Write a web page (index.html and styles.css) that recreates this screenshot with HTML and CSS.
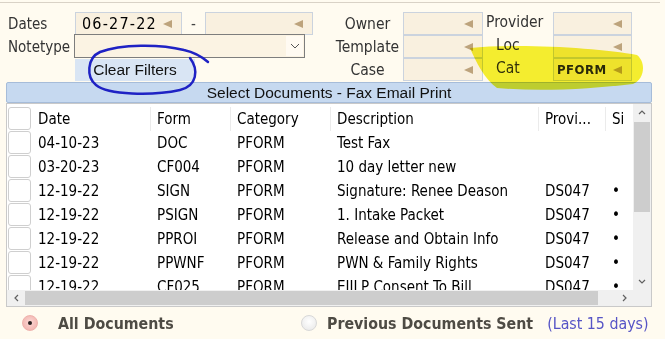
FILE: index.html
```html
<!DOCTYPE html>
<html lang="en">
<head>
    <meta charset="UTF-8">
    <title>Select Documents</title>
    <link rel="stylesheet" href="styles.css">
</head>
<body>
<div class="page">
    <div class="topline"></div>

    <div class="filters">
        <div class="left">
            <div class="frow">
                <span class="lbl">Dates</span>
                <div class="field date"><span class="val">06-27-22</span><i class="tri"></i></div>
                <span class="dash">-</span>
                <div class="field date2"><i class="tri"></i></div>
            </div>
            <div class="frow">
                <span class="lbl">Notetype</span>
                <div class="select">
                    <span class="chev">
                        <svg width="10" height="6" viewBox="0 0 10 6"><path d="M1 1 L5 5 L9 1" fill="none" stroke="#555" stroke-width="1"/></svg>
                    </span>
                </div>
            </div>
            <div class="frow">
                <button class="clear">Clear Filters</button>
            </div>
        </div>

        <div class="mid">
            <div class="frow"><span class="clbl">Owner</span><div class="field box"><i class="tri"></i></div></div>
            <div class="frow"><span class="clbl">Template</span><div class="field box"><i class="tri"></i></div></div>
            <div class="frow"><span class="clbl">Case</span><div class="field box"><i class="tri"></i></div></div>
        </div>

        <div class="right">
            <div class="frow"><span class="rlbl">Provider</span><div class="field rbox"><i class="tri"></i></div></div>
            <div class="frow"><span class="rlbl indent">Loc</span><div class="field rbox"><i class="tri"></i></div></div>
            <div class="frow"><span class="rlbl indent">Cat</span><div class="field rbox"><span class="code">PFORM</span><i class="tri"></i></div></div>
        </div>
    </div>

    <div class="bar">Select Documents - Fax Email Print</div>

    <div class="grid">
        <div class="view">
            <div class="rows">
                <div class="row head">
                    <span class="cb"><i></i></span>
                    <span class="c">Date</span>
                    <span class="c sep">Form</span>
                    <span class="c sep">Category</span>
                    <span class="c sep">Description</span>
                    <span class="c sep">Provi...</span>
                    <span class="c sep">Si</span>
                </div>
                <div class="row">
                    <span class="cb"><i></i></span>
                    <span class="c">04-10-23</span><span class="c">DOC</span><span class="c">PFORM</span>
                    <span class="c">Test Fax</span><span class="c"></span><span class="c"></span>
                </div>
                <div class="row">
                    <span class="cb"><i></i></span>
                    <span class="c">03-20-23</span><span class="c">CF004</span><span class="c">PFORM</span>
                    <span class="c">10 day letter new</span><span class="c"></span><span class="c"></span>
                </div>
                <div class="row">
                    <span class="cb"><i></i></span>
                    <span class="c">12-19-22</span><span class="c">SIGN</span><span class="c">PFORM</span>
                    <span class="c">Signature: Renee Deason</span><span class="c">DS047</span><span class="c">•</span>
                </div>
                <div class="row">
                    <span class="cb"><i></i></span>
                    <span class="c">12-19-22</span><span class="c">PSIGN</span><span class="c">PFORM</span>
                    <span class="c">1. Intake Packet</span><span class="c">DS047</span><span class="c">•</span>
                </div>
                <div class="row">
                    <span class="cb"><i></i></span>
                    <span class="c">12-19-22</span><span class="c">PPROI</span><span class="c">PFORM</span>
                    <span class="c">Release and Obtain Info</span><span class="c">DS047</span><span class="c">•</span>
                </div>
                <div class="row">
                    <span class="cb"><i></i></span>
                    <span class="c">12-19-22</span><span class="c">PPWNF</span><span class="c">PFORM</span>
                    <span class="c">PWN &amp; Family Rights</span><span class="c">DS047</span><span class="c">•</span>
                </div>
                <div class="row">
                    <span class="cb"><i></i></span>
                    <span class="c">12-19-22</span><span class="c">CF025</span><span class="c">PFORM</span>
                    <span class="c">EIILP Consent To Bill</span><span class="c">DS047</span><span class="c">•</span>
                </div>
            </div>
            <div class="vscroll">
                <span class="sbtn">
                    <svg width="8" height="5" viewBox="0 0 8 5"><path d="M1 4 L4 1 L7 4" fill="none" stroke="#606060" stroke-width="1.2"/></svg>
                </span>
                <span class="vthumb"></span>
                <span class="vfill"></span>
                <span class="sbtn">
                    <svg width="8" height="5" viewBox="0 0 8 5"><path d="M1 1 L4 4 L7 1" fill="none" stroke="#606060" stroke-width="1.2"/></svg>
                </span>
            </div>
        </div>
        <div class="hscroll">
            <span class="hbtn">
                <svg width="5" height="8" viewBox="0 0 5 8"><path d="M4 1 L1 4 L4 7" fill="none" stroke="#606060" stroke-width="1.2"/></svg>
            </span>
            <span class="hthumb"></span>
            <span class="hfill"></span>
            <span class="hbtn">
                <svg width="5" height="8" viewBox="0 0 5 8"><path d="M1 1 L4 4 L1 7" fill="none" stroke="#606060" stroke-width="1.2"/></svg>
            </span>
            <span class="corner"></span>
        </div>
    </div>

    <div class="footer">
        <div class="opt first"><span class="radio on"><i></i></span><b>All Documents</b></div>
        <div class="opt"><span class="radio"></span><b>Previous Documents Sent</b><span class="days">(Last 15 days)</span></div>
    </div>

    <!-- marker scribbles drawn over the screenshot -->
    <svg class="marker" width="665" height="339" viewBox="0 0 665 339">
        <path class="hl" d="M470,48 C520,43 600,48 637,55 C646,62 645,79 633,84 C590,89 540,92 497,88 C485,80 476,62 470,48 Z"/>
        <path class="ring" d="M208,62 C201,56 193,52 184,50 C160,44 121,44 100,52 C87,58 86,77 96,85 C108,95 152,96 180,90 C197,86 199,70 190,58"/>
    </svg>
</div>
</body>
</html>
```

FILE: styles.css
```css
body {
    margin: 0;
    background-color: #fffbf0;
    font-family: "DejaVu Sans Condensed", "DejaVu Sans", sans-serif;
    font-stretch: condensed;
    font-size: 15px;
    color: #000;
}

.page {
    position: relative;
    width: 665px;
    height: 339px;
    overflow: hidden;
}

.topline {
    height: 2px;
    margin-right: 5px;
    border-bottom: 1px solid #d9d2c6;
}

/* filter area */

.filters {
    display: flex;
    padding: 9px 0 0 8px;
    height: 69px;
}

.frow {
    display: flex;
    align-items: center;
    height: 23px;
}

.lbl {
    width: 66px;
    color: #333;
    font-size: 15px;
}

.field {
    position: relative;
    box-sizing: border-box;
    height: 23px;
    background-color: #f9f0df;
    border: 1px solid #cbd3de;
    display: flex;
    align-items: center;
}

.tri {
    position: absolute;
    right: 9px;
    top: 7px;
    width: 0;
    height: 0;
    border-top: 4px solid transparent;
    border-bottom: 4px solid transparent;
    border-right: 9px solid #bda37c;
}

.date {
    width: 107px;
    margin-left: 1px;
}

.val {
    padding-left: 6px;
    font-size: 16px;
    letter-spacing: 1.2px;
    font-stretch: normal;
}

.dash {
    width: 23px;
    text-align: center;
    color: #444;
}

.date2 {
    width: 108px;
}

.select {
    position: relative;
    box-sizing: border-box;
    width: 231px;
    height: 24px;
    margin-top: -1px;
    background-color: #fbf3e3;
    border: 1px solid #7d7d7d;
}

.chev {
    position: absolute;
    right: 1px;
    top: 1px;
    width: 17px;
    height: 20px;
    background-color: #fffaf2;
    display: flex;
    align-items: center;
    justify-content: center;
}

.clear {
    margin: 1px 0 0 67px;
    width: 120px;
    height: 22px;
    border: none;
    padding: 0;
    background-color: #d9e5f4;
    font-family: "Liberation Sans", Arial, sans-serif;
    font-size: 15.5px;
    color: #111;
}

.mid {
    margin-left: 22px;
}

.clbl {
    width: 65px;
    margin-right: 3px;
    text-align: center;
    color: #333;
    font-size: 15.5px;
}

.box {
    width: 80px;
    margin-top: -1px;
}

.mid .frow:first-child .box,
.right .frow:first-child .rbox {
    margin-top: 0;
}

.rlbl {
    width: 70px;
    padding-left: 3px;
    box-sizing: border-box;
    color: #333;
    font-size: 15.5px;
    margin-top: -3px;
}

.rlbl.indent {
    padding-left: 13px;
}

.rbox {
    width: 79px;
    margin-top: -1px;
}

.code {
    padding-left: 3px;
    font-size: 13px;
    font-weight: bold;
    color: #2b2b2b;
    letter-spacing: 0.5px;
}

/* title bar */

.bar {
    box-sizing: border-box;
    margin: 1px 0 0 6px;
    width: 646px;
    height: 21px;
    background-color: #c6d9f0;
    border: 1px solid #a6bcd9;
    border-radius: 2px;
    text-align: center;
    font-family: "Liberation Sans", Arial, sans-serif;
    font-size: 15.5px;
    line-height: 19px;
    color: #111;
}

/* document grid */

.grid {
    box-sizing: border-box;
    margin: 0 0 0 6px;
    width: 646px;
    height: 204px;
    border: 1px solid #c9c9c9;
    background-color: #fff;
}

.view {
    display: flex;
    height: 186px;
}

.rows {
    width: 626px;
    padding-top: 3px;
    overflow: hidden;
}

.row {
    display: grid;
    grid-template-columns: 25px 118px 80px 100px 208px 67px 60px;
    height: 24px;
    align-items: center;
    white-space: nowrap;
}

.cb {
    height: 24px;
}

.cb i {
    display: block;
    box-sizing: border-box;
    margin-left: 1px;
    width: 23px;
    height: 23px;
    border: 1px solid #cfcfcf;
    border-radius: 3px;
    background-color: #fff;
}

.c {
    padding-left: 6px;
    overflow: hidden;
}

.head .c {
    height: 24px;
    line-height: 24px;
}

.row .c:nth-child(3),
.row .c:nth-child(4),
.row .c:nth-child(5),
.row .c:nth-child(6),
.row .c:nth-child(7) {
    padding-left: 7px;
}

.head .sep {
    border-left: 1px solid #ebebeb;
    padding-left: 6px !important;
}

.vscroll {
    width: 18px;
    background-color: #f0f0f0;
    display: flex;
    flex-direction: column;
}

.sbtn {
    height: 17px;
    display: flex;
    align-items: center;
    justify-content: center;
}

.vthumb {
    margin: 1px 1px 0 1px;
    height: 90px;
    background-color: #cdcdcd;
}

.vfill {
    flex: 1;
}

.hscroll {
    display: flex;
    height: 16px;
    background-color: #f0f0f0;
}

.hbtn {
    width: 18px;
    display: flex;
    align-items: center;
    justify-content: center;
}

.hthumb {
    margin: 1px 0;
    width: 573px;
    background-color: #cdcdcd;
}

.hfill {
    flex: 1;
}

.corner {
    width: 18px;
}

/* footer radios */

.footer {
    display: flex;
    align-items: center;
    height: 32px;
    padding-left: 22px;
}

.opt {
    display: flex;
    align-items: center;
}

.opt.first {
    width: 279px;
}

.opt b {
    color: #4e4b44;
    font-size: 15.8px;
}

.radio {
    box-sizing: border-box;
    width: 16px;
    height: 16px;
    border-radius: 50%;
    border: 1px solid #d8d8d8;
    background: radial-gradient(circle at 50% 40%, #ffffff, #e6e6e6);
    margin-right: 10px;
    display: flex;
    align-items: center;
    justify-content: center;
}

.radio.on {
    border-color: #efb2ad;
    background: radial-gradient(circle at 50% 45%, #fbd9d6, #f0aaa4);
    margin-right: 20px;
}

.radio.on i {
    width: 4px;
    height: 4px;
    border-radius: 50%;
    background-color: #2a2020;
}

.days {
    margin-left: 14px;
    color: #5654c6;
    font-size: 15.8px;
}

/* scribbles over the capture */

.marker {
    position: absolute;
    left: 0;
    top: 0;
    pointer-events: none;
}

.hl {
    fill: #f3f020;
    opacity: 0.92;
    mix-blend-mode: multiply;
}

.ring {
    fill: none;
    stroke: #1f22c4;
    stroke-width: 2.5;
    stroke-linecap: round;
}
```
